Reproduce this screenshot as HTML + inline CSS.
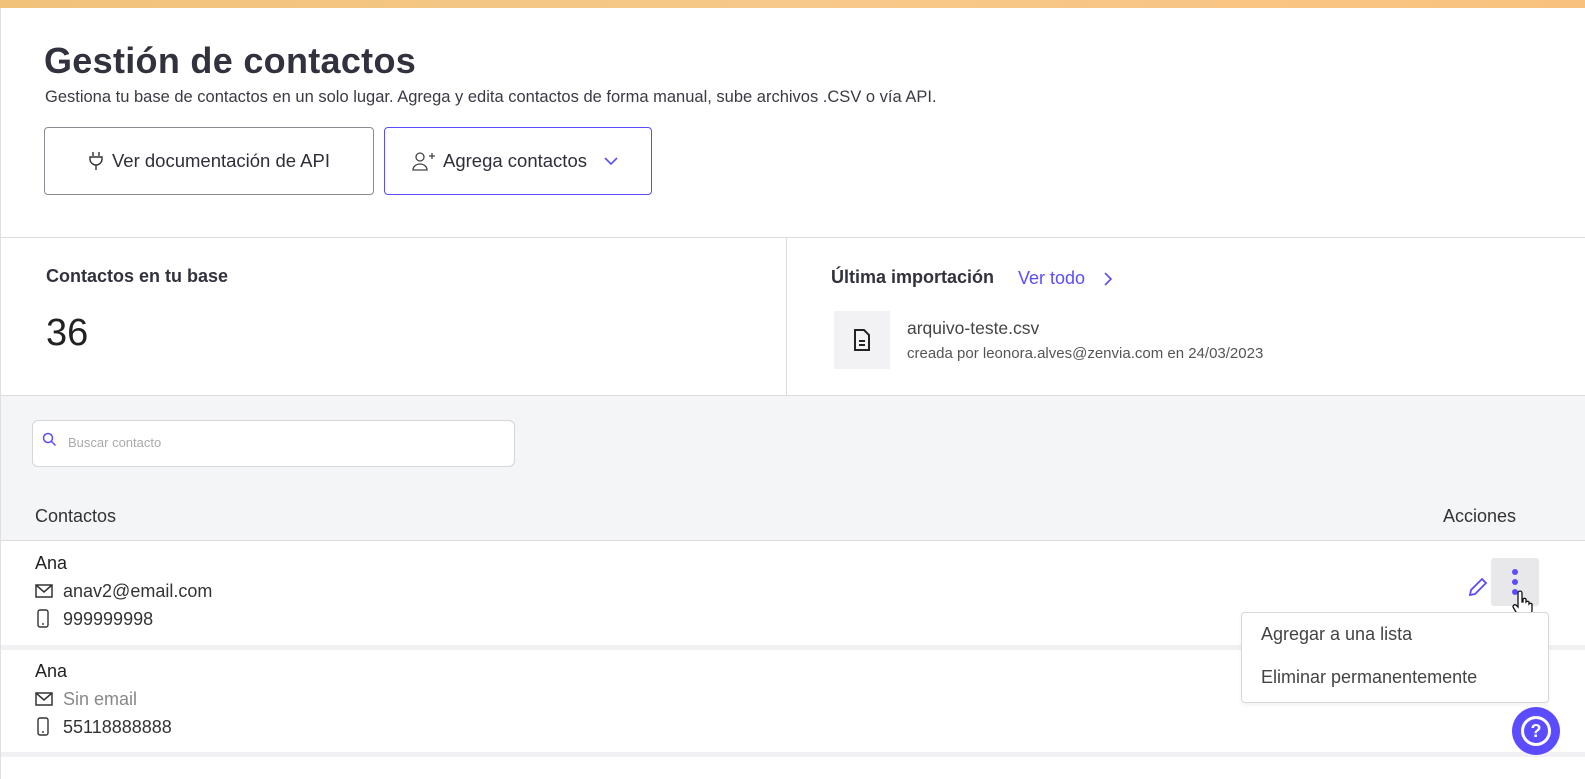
<!DOCTYPE html>
<html><head><meta charset="utf-8"><style>
*{margin:0;padding:0;box-sizing:border-box}
body{width:1585px;height:779px;overflow:hidden;background:#fff;font-family:"Liberation Sans",sans-serif;color:#2b2b36;position:relative}
.abs{position:absolute}
.top{left:0;top:0;width:1585px;height:8px;background:linear-gradient(90deg,#f0c27a,#f7c98a 50%,#f8c27e)}
h1{position:absolute;left:44px;top:40px;font-size:36px;font-weight:bold;color:#32323f;letter-spacing:0.3px}
.sub{left:45px;top:88px;font-size:16.5px;color:#3a3a45}
.btn{top:127px;height:68px;border:1px solid #8a8a92;border-radius:4px;display:flex;align-items:center;justify-content:center;font-size:18.5px;color:#2f2f3a;gap:8px}
.hl{height:1px;background:#dcdce0}
.t{font-size:18px;color:#333}
</style></head><body>
<div class="abs top"></div>
<div class="abs" style="left:0;top:8px;width:1px;height:771px;background:#e0e0e4"></div>
<h1>Gestión de contactos</h1>
<div class="abs sub">Gestiona tu base de contactos en un solo lugar. Agrega y edita contactos de forma manual, sube archivos .CSV o vía API.</div>
<div class="abs btn" style="left:44px;width:330px">
<svg width="16" height="20" viewBox="0 0 16 20" fill="none" stroke="#333" stroke-width="1.4"><path d="M5 1v4M11 1v4M2 6h12v2a6 6 0 0 1-12 0z M8 14v5"/></svg>Ver documentación de API</div>
<div class="abs btn" style="left:384px;width:268px;border-color:#5b4dff">
<svg width="24" height="20" viewBox="0 0 24 20" fill="none" stroke="#444" stroke-width="1.3"><circle cx="9" cy="6" r="4"/><path d="M2 19a7 6 0 0 1 14 0z M18 5h6M21 2v6"/></svg>Agrega contactos
<svg width="30" height="14" viewBox="0 0 30 14" fill="none" stroke="#5b4dff" stroke-width="1.6"><path d="M10 4l6 6 6-6"/></svg></div>
<div class="abs hl" style="left:0;top:237px;width:1585px"></div>
<div class="abs" style="left:786px;top:238px;width:1px;height:157px;background:#dcdce0"></div>
<div class="abs" style="left:46px;top:266px;font-size:18px;font-weight:bold;color:#32323f">Contactos en tu base</div>
<div class="abs" style="left:46px;top:312px;font-size:38px;color:#222">36</div>
<div class="abs" style="left:831px;top:267px;font-size:18px;font-weight:bold;color:#32323f">Última importación</div>
<div class="abs" style="left:1018px;top:268px;font-size:18px;color:#5b4dff">Ver todo</div>
<svg class="abs" style="left:1102px;top:271px" width="12" height="16" viewBox="0 0 12 16" fill="none" stroke="#5b4dff" stroke-width="1.6"><path d="M3 2l6 6-6 6"/></svg>
<div class="abs" style="left:834px;top:311px;width:56px;height:58px;background:#f2f2f4;display:flex;align-items:center;justify-content:center">
<svg width="20" height="24" viewBox="0 0 20 24" fill="none" stroke="#222" stroke-width="2"><path d="M3 2h9l5 5v15H3z M7 13h6M7 17h6"/></svg></div>
<div class="abs" style="left:907px;top:318px;font-size:17.5px;color:#444">arquivo-teste.csv</div>
<div class="abs" style="left:907px;top:345px;font-size:15px;color:#555">creada por leonora.alves@zenvia.com en 24/03/2023</div>
<div class="abs" style="left:1px;top:395px;width:1584px;height:146px;background:#f4f5f7;border-top:1px solid #dcdce0;border-bottom:1px solid #dcdce0"></div>
<div class="abs" style="left:32px;top:420px;width:483px;height:47px;background:#fff;border:1px solid #d5d5da;border-radius:6px"></div>
<svg class="abs" style="left:42px;top:432px" width="16" height="16" viewBox="0 0 16 16" fill="none" stroke="#5b4dff" stroke-width="1.5"><circle cx="6" cy="6" r="4.5"/><path d="M9.5 9.5l4 4"/></svg>
<div class="abs" style="left:68px;top:435px;font-size:13px;color:#aaa">Buscar contacto</div>
<div class="abs t" style="left:35px;top:506px">Contactos</div>
<div class="abs t" style="left:1443px;top:506px">Acciones</div>
<div class="abs" style="left:1px;top:645px;width:1584px;height:5px;background:#f1f1f3"></div>
<div class="abs" style="left:1px;top:752px;width:1584px;height:5px;background:#f1f1f3"></div>
<div class="abs t" style="left:35px;top:553px;color:#222">Ana</div>
<svg class="abs" style="left:35px;top:584px" width="18" height="14" viewBox="0 0 18 14" fill="none" stroke="#333" stroke-width="1.5"><rect x="1" y="1" width="16" height="12"/><path d="M1 1l8 7 8-7"/></svg>
<div class="abs t" style="left:63px;top:581px">anav2@email.com</div>
<svg class="abs" style="left:37px;top:609px" width="12" height="19" viewBox="0 0 12 19" fill="none" stroke="#333" stroke-width="1.4"><rect x="1" y="1" width="10" height="17" rx="2"/><path d="M5 15h2"/></svg>
<div class="abs t" style="left:63px;top:609px">999999998</div>
<div class="abs t" style="left:35px;top:661px;color:#222">Ana</div>
<svg class="abs" style="left:35px;top:692px" width="18" height="14" viewBox="0 0 18 14" fill="none" stroke="#333" stroke-width="1.5"><rect x="1" y="1" width="16" height="12"/><path d="M1 1l8 7 8-7"/></svg>
<div class="abs t" style="left:63px;top:689px;color:#888">Sin email</div>
<svg class="abs" style="left:37px;top:717px" width="12" height="19" viewBox="0 0 12 19" fill="none" stroke="#333" stroke-width="1.4"><rect x="1" y="1" width="10" height="17" rx="2"/><path d="M5 15h2"/></svg>
<div class="abs t" style="left:63px;top:717px">55118888888</div>
<svg class="abs" style="left:1467px;top:576px" width="22" height="22" viewBox="0 0 22 22" fill="none" stroke="#5b4dff" stroke-width="1.8"><path d="M3 19l1-5L15 3l4 4L8 18z"/></svg>
<div class="abs" style="left:1491px;top:558px;width:48px;height:48px;background:#e8e8ea;border-radius:3px"></div>
<div class="abs" style="left:1512px;top:569px;width:6px;height:6px;border-radius:50%;background:#5b4dff"></div>
<div class="abs" style="left:1512px;top:579px;width:6px;height:6px;border-radius:50%;background:#5b4dff"></div>
<div class="abs" style="left:1512px;top:589px;width:6px;height:6px;border-radius:50%;background:#5b4dff"></div>
<svg class="abs" style="left:1510px;top:590px" width="30" height="30" viewBox="0 0 30 30" fill="#fff" stroke="#111" stroke-width="1.3"><path d="M8 3a2 2 0 0 1 4 0v9h1v-3a2 2 0 0 1 3 0v3a2 2 0 0 1 3 0v2a2 2 0 0 1 3 0v6c0 4-3 7-7 7h-2c-3 0-5-2-7-5l-3-5a2 2 0 0 1 3-2l2 2z"/></svg>
<div class="abs" style="left:1241px;top:612px;width:308px;height:91px;background:#fff;border:1px solid #d8d8dc;border-radius:4px;box-shadow:0 2px 4px rgba(0,0,0,.06)"></div>
<div class="abs" style="left:1261px;top:624px;font-size:18px;color:#444">Agregar a una lista</div>
<div class="abs" style="left:1261px;top:667px;font-size:18px;color:#444">Eliminar permanentemente</div>
<div class="abs" style="left:1512px;top:707px;width:48px;height:48px;border-radius:50%;background:#5b4dff;display:flex;align-items:center;justify-content:center">
<div style="width:30px;height:30px;border:3px solid #fff;border-radius:50%;color:#fff;font-weight:bold;font-size:18px;line-height:24px;text-align:center">?</div></div>
</body></html>
